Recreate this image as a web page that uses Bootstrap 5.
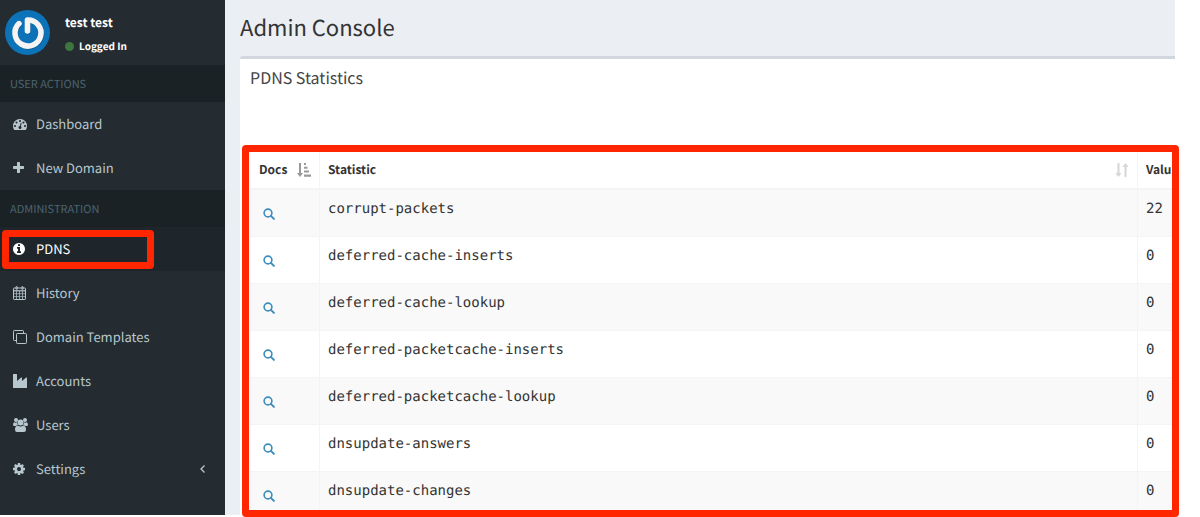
<!DOCTYPE html>
<html lang="en">
<head>
<meta charset="utf-8">
<meta name="viewport" content="width=device-width, initial-scale=1">
<title>Admin Console</title>
<link href="https://cdn.jsdelivr.net/npm/bootstrap@5.3.0/dist/css/bootstrap.min.css" rel="stylesheet">
<style>
body { font-family: "Noto Sans CJK SC", sans-serif; font-size: 13px; line-height: 20px; color: #333; background: #fff; text-rendering: geometricPrecision; }
.shell { height: 100vh; padding: 0 25px 2px 0; }
.sidebar { width: 225px; background: #242c32; }
.user-panel { height: 65px; padding: 11px 5px 9px; gap: 15px; color: #fff; font-weight: 700; line-height: 24px; }
.user-panel svg { margin-top: -1px; }
.user-name { font-size: 12px; }
.user-state { font-size: 10px; gap: 5px; line-height: 22px; }
.state-dot { width: 9px; height: 9px; background: #3d763e; }
.menu-heading { height: 37px; padding: 9px 10px 7px; font-size: 11px; line-height: 21px; color: #4b646f; background: #1b2226; }
.menu-link { height: 44px; padding: 0 15px 0 13px; gap: 9px; color: #b8c7ce; text-decoration: none; }
.menu-link svg { width: 14px; height: 14px; overflow: visible; flex: none; }
.menu-link.current { color: #fff; background: #1f262b; }
.mark-frame { position: absolute; border: 7px solid #ff2600; border-radius: 4px; pointer-events: none; z-index: 2; }
.mark-menu { inset: 3px 71px 2px 2px; }
.mark-table { inset: -7px -4px -2px -8px; }
.content-area { background: #ebeef3; padding-left: 15px; min-width: 0; }
.page-title { height: 56px; padding-top: 13px; font-size: 22px; line-height: 28px; }
.panel { border-top: 3px solid #d2d6de; border-top-left-radius: 3px; background: #fff; padding-left: 10px; min-height: 0; }
.panel-title { height: 93px; padding-top: 8px; font-size: 16px; line-height: 20px; color: #444; }
.table-area { min-height: 0; }
.table-clip { overflow: hidden; height: 100%; }
.stats { table-layout: fixed; border-collapse: separate; border-spacing: 0; width: 100%; --bs-table-striped-bg: #f9f9f9; --bs-table-color: #333; --bs-table-striped-color: #333; color: #333; }
.stats th, .stats td { padding: 8px; border: 0 solid #f4f4f4; border-right-width: 1px; border-bottom-width: 1px; }
.stats th { height: 38px; border-bottom-width: 2px; font-size: 12px; line-height: 18px; vertical-align: middle; }
.stats th:first-child { padding-left: 9px; }
.stats td { height: 47px; padding-top: 9px; vertical-align: top; font-family: "DejaVu Sans Mono", monospace; font-size: 14px; line-height: 20px; }
.stats th:last-child, .stats td:last-child { white-space: nowrap; border-right: 0; padding-right: 0; }
.doc-link { display: block; padding: 9px 5px 0; line-height: 0; color: #3c8dbc; }
.col-docs { width: 70px; }
.col-value { width: 37px; }
</style>
</head>
<body>
<div class="shell d-flex">
  <aside class="sidebar d-flex flex-column flex-shrink-0">
    <div class="user-panel d-flex">
      <svg width="45" height="45" viewBox="0 0 45 45" aria-hidden="true">
        <circle cx="22.5" cy="22.5" r="22.5" fill="#0c73b8"/>
        <g fill="none" stroke-linecap="round" stroke-linejoin="round" stroke-width="5.6">
          <path d="M14 13.600A13 13 0 1 0 22.500 10V21" stroke="#0a5c96" transform="translate(.5 .8)"/>
          <path d="M14 13.600A13 13 0 1 0 22.500 10V21" stroke="#f4f4f4"/>
        </g>
      </svg>
      <div>
        <div class="user-name">test test</div>
        <div class="user-state d-flex align-items-center"><span class="state-dot rounded-circle"></span>Logged In</div>
      </div>
    </div>
    <nav>
      <div class="menu-heading">USER ACTIONS</div>
      <a class="menu-link d-flex align-items-center" href="#"><svg viewBox="0 0 1792 1792" fill="currentColor" aria-hidden="true"><path d="M384 1152q0-53-37.500-90.500t-90.500-37.500-90.500 37.500-37.500 90.500 37.500 90.500 90.500 37.500 90.500-37.500 37.500-90.500zm192-448q0-53-37.500-90.500t-90.500-37.500-90.500 37.500-37.500 90.500 37.500 90.500 90.500 37.500 90.500-37.500 37.500-90.500zm428 481l101-382q6-26-7.500-48.500t-38.500-29.500-48 6.500-30 39.500l-101 382q-60 5-107 43.500t-63 98.500q-20 77 20 146t117 89 146-20 89-117q16-60-6-117t-72-91zm660-33q0-53-37.500-90.500t-90.500-37.500-90.500 37.500-37.500 90.500 37.500 90.500 90.500 37.500 90.500-37.500 37.500-90.500zm-640-640q0-53-37.500-90.500t-90.500-37.500-90.500 37.500-37.500 90.500 37.500 90.500 90.500 37.500 90.500-37.500 37.500-90.500zm448 192q0-53-37.500-90.500t-90.500-37.500-90.500 37.500-37.500 90.500 37.500 90.500 90.500 37.500 90.500-37.500 37.500-90.500zm320 448q0 261-141 483-19 29-54 29h-1402q-35 0-54-29-141-221-141-483 0-182 71-348t191-286 286-191 348-71 348 71 286 191 191 286 71 348z"/></svg>Dashboard</a>
      <a class="menu-link d-flex align-items-center" href="#"><svg viewBox="192 0 1792 1792" fill="currentColor" aria-hidden="true"><path d="M1600 736v192q0 40-28 68t-68 28h-416v416q0 40-28 68t-68 28h-192q-40 0-68-28t-28-68v-416h-416q-40 0-68-28t-28-68v-192q0-40 28-68t68-28h416v-416q0-40 28-68t68-28h192q40 0 68 28t28 68v416h416q40 0 68 28t28 68z"/></svg>New Domain</a>
      <div class="menu-heading">ADMINISTRATION</div>
      <a class="menu-link current d-flex align-items-center position-relative" href="#" aria-current="page"><svg viewBox="128 0 1792 1792" fill="currentColor" aria-hidden="true"><path d="M1152 1376v-160q0-14-9-23t-23-9h-96v-512q0-14-9-23t-23-9h-320q-14 0-23 9t-9 23v160q0 14 9 23t23 9h96v320h-96q-14 0-23 9t-9 23v160q0 14 9 23t23 9h448q14 0 23-9t9-23zm-128-896v-160q0-14-9-23t-23-9h-192q-14 0-23 9t-9 23v160q0 14 9 23t23 9h192q14 0 23-9t9-23zm640 416q0 209-103 385.500t-279.500 279.500-385.500 103-385.500-103-279.500-279.500-103-385.500 103-385.500 279.500-279.500 385.500-103 385.500 103 279.500 279.500 103 385.500z"/></svg>PDNS<span class="mark-frame mark-menu"></span></a>
      <a class="menu-link d-flex align-items-center" href="#"><svg viewBox="0 0 14 14" fill="none" stroke="currentColor" aria-hidden="true"><rect x=".5" y="2" width="12" height="11.500" rx=".7"/><path d="M.5 4.800h12" stroke-width="1.200"/><path d="M3.500 5v8.500M6.500 5v8.500M9.500 5v8.500M.5 7.700h12M.5 10.600h12" stroke-width=".7"/><rect x="3" y=".5" width="1.300" height="3" rx=".6"/><rect x="8.800" y=".5" width="1.300" height="3" rx=".6"/></svg>History</a>
      <a class="menu-link d-flex align-items-center" href="#"><svg viewBox="0 0 14 14" fill="none" stroke="currentColor" aria-hidden="true"><rect x="3.500" y="3.500" width="10" height="10" rx=".8"/><path d="M3.500 10.500h-2.200a.8.800 0 0 1-.8-.8v-8.400a.8.800 0 0 1 .8-.8h8.400a.8.800 0 0 1 .8.800v2.200"/></svg>Domain Templates</a>
      <a class="menu-link d-flex align-items-center" href="#"><svg viewBox="0 0 14 14" fill="currentColor" aria-hidden="true"><path d="M.5 0h3q.5 0 .5.500v6.600l4.200-3.500q.8-.4.800.4v3.100l4.200-3.500q.8-.4.800.4v9.500q0 .5-.5.500h-13q-.5 0-.5-.5v-13q0-.5.500-.5z"/></svg>Accounts</a>
      <a class="menu-link d-flex align-items-center" href="#"><svg viewBox="0 0 14 14" fill="currentColor" aria-hidden="true"><circle cx="3" cy="2" r="2"/><circle cx="12" cy="2" r="2"/><circle cx="7.500" cy="4.500" r="3"/><path d="M1.200 4.200Q2.500 5 4 4.300q-.2 1.700.9 2.700-1.300 0-2 1H1.500Q0 8 0 6.700q0-2 1.200-2.500zM13.800 4.200q-1.300.8-2.800.1.200 1.700-.9 2.700 1.300 0 2 1h1.400q1.500 0 1.500-1.300 0-2-1.200-2.500zM4.500 7.500q3 2 6 0 2.500.3 2.500 4.300 0 2.200-2 2.200H4q-2 0-2-2.200 0-4 2.500-4.300z"/></svg>Users</a>
      <a class="menu-link d-flex align-items-center" href="#"><svg viewBox="128 0 1792 1792" fill="currentColor" aria-hidden="true"><path d="M1152 896q0-106-75-181t-181-75-181 75-75 181 75 181 181 75 181-75 75-181zm512-109v222q0 12-8 23t-20 13l-185 28q-19 54-39 91 35 50 107 138 10 12 10 25t-9 23q-27 37-99 108t-94 71q-12 0-26-9l-138-108q-44 23-91 38-16 136-29 186-7 28-36 28h-222q-14 0-24.500-8.500t-11.500-21.500l-28-184q-49-16-90-37l-141 107q-10 9-25 9-14 0-25-11-126-114-165-168-7-10-7-23 0-12 8-23 15-21 51-66.500t54-70.500q-27-50-41-99l-183-27q-13-2-21-12.500t-8-23.500v-222q0-12 8-23t19-13l186-28q14-46 39-92-40-57-107-138-10-12-10-24 0-10 9-23 26-36 98.500-107.500t94.500-71.500q13 0 26 10l138 107q44-23 91-38 16-136 29-186 7-28 36-28h222q14 0 24.500 8.500t11.500 21.500l28 184q49 16 90 37l142-107q9-9 24-9 13 0 25 10 129 119 165 170 7 8 7 22 0 12-8 23-15 21-51 66.500t-54 70.500q26 50 41 98l183 28q13 2 21 12.500t8 23.500z"/></svg>Settings<svg class="ms-auto" viewBox="0 0 14 14" fill="none" stroke="currentColor" stroke-width="1.300" aria-hidden="true"><path d="M8.500 3.500L5 7l3.500 3.500"/></svg></a>
    </nav>
  </aside>

  <main class="content-area flex-grow-1 d-flex flex-column">
    <h1 class="page-title m-0 fw-normal">Admin Console</h1>
    <section class="panel flex-grow-1 d-flex flex-column">
      <h2 class="panel-title m-0 fw-normal flex-shrink-0">PDNS Statistics</h2>
      <div class="table-area position-relative flex-grow-1">
        <div class="table-clip">
          <table class="table table-striped stats m-0">
            <colgroup><col class="col-docs"><col><col class="col-value"></colgroup>
            <thead>
              <tr>
                <th scope="col"><div class="d-flex justify-content-between align-items-center">Docs<svg width="14" height="14" viewBox="0 0 14 14" fill="#999" aria-hidden="true"><path d="M2 0h2v10h2l-3 4-3-4h2zM7 0h2v2H7zM7 3.700h3.500v2H7zM7 7.400h5v2H7zM7 11.500h7v2.200H7z"/></svg></div></th>
                <th scope="col"><div class="d-flex justify-content-between align-items-center">Statistic<svg width="14" height="14" viewBox="0 0 14 14" fill="#d6d6d6" aria-hidden="true"><path d="M2.500 0h2v10h2l-3 4-3-4h2zM9.500 14h2V4h2l-3-4-3 4h2z"/></svg></div></th>
                <th scope="col" aria-label="Value">Valu</th>
              </tr>
            </thead>
            <tbody id="rows"></tbody>
          </table>
        </div>
        <div class="mark-frame mark-table"></div>
      </div>
    </section>
  </main>
</div>
<script src="https://cdn.jsdelivr.net/npm/bootstrap@5.3.0/dist/js/bootstrap.bundle.min.js"></script>
<script>
const stats = [["corrupt-packets", 22], ["deferred-cache-inserts", 0], ["deferred-cache-lookup", 0], ["deferred-packetcache-inserts", 0], ["deferred-packetcache-lookup", 0], ["dnsupdate-answers", 0], ["dnsupdate-changes", 0]];
document.getElementById("rows").innerHTML = stats.map(([name, value]) => `<tr>
  <td><a class="doc-link" href="#" aria-label="Documentation for ${name}"><svg width="12" height="12" viewBox="0 0 12 12" fill="none" stroke="currentColor" stroke-width="1.600"><circle cx="5" cy="5" r="3.900"/><path d="M7.900 7.900l3 3" stroke-width="2" stroke-linecap="round"/></svg></a></td>
  <td>${name}</td><td>${value}</td></tr>`).join("");
</script>
</body>
</html>
